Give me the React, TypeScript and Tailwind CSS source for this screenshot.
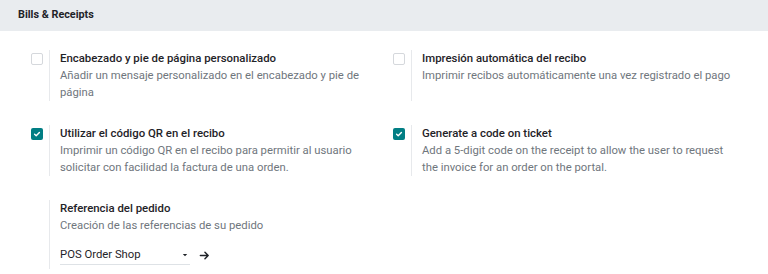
import React from 'react';

interface SettingProps {
  title: string;
  description: string;
  checked?: boolean;
  hasCheckbox?: boolean;
  children?: React.ReactNode;
}

const Checkbox = ({ checked }: { checked?: boolean }) => (
  <div
    className={
      checked
        ? "w-[12px] h-[12px] mt-[3px] rounded-[2px] bg-[#017e84] flex items-center justify-center"
        : "w-[12px] h-[12px] mt-[3px] rounded-[2px] border border-[#d5d8dc] bg-white"
    }
  >
    {checked && (
      <svg width="8" height="8" viewBox="0 0 8 8" fill="none">
        <path d="M1.6 4.2 3.2 5.7 6.4 2.4" stroke="white" strokeWidth="1.4" strokeLinecap="round" strokeLinejoin="round" />
      </svg>
    )}
  </div>
);

// descriptions carry their own line breaks so wrapping matches the settings page
const Setting = ({ title, description, checked, hasCheckbox = true, children }: SettingProps) => (
  <div className="flex pl-[13px]">
    <div className="w-[18px] shrink-0">{hasCheckbox && <Checkbox checked={checked} />}</div>
    <div className="border-l border-[#e7e9ec] pl-[10px] pr-2">
      <div className="text-[11.4px] leading-[17px] text-[#1f2328] font-medium">{title}</div>
      <div className="text-[11.3px] leading-[17px] text-[#6f767d] whitespace-pre-line">{description}</div>
      {children}
    </div>
  </div>
);

export default function App() {
  return (
    <div className="w-[768px] h-[274px] bg-white overflow-hidden font-[Roboto,sans-serif]">
      <div className="h-[31px] bg-[#e9ecef] flex items-center px-[18px]">
        <span className="text-[10.8px] font-bold text-[#1f2328]">Bills &amp; Receipts</span>
      </div>
      <div className="grid grid-cols-2 px-[18px] pt-[19px] gap-y-[24px] w-[760px]">
        <Setting
          title="Encabezado y pie de página personalizado"
          description={"Añadir un mensaje personalizado en el encabezado y pie de\npágina"}
        />
        <Setting
          title="Impresión automática del recibo"
          description="Imprimir recibos automáticamente una vez registrado el pago"
        />
        <Setting
          checked
          title="Utilizar el código QR en el recibo"
          description={"Imprimir un código QR en el recibo para permitir al usuario\nsolicitar con facilidad la factura de una orden."}
        />
        <Setting
          checked
          title="Generate a code on ticket"
          description={"Add a 5-digit code on the receipt to allow the user to request\nthe invoice for an order on the portal."}
        />
        <Setting
          hasCheckbox={false}
          title="Referencia del pedido"
          description="Creación de las referencias de su pedido"
        >
          <div className="flex items-center mt-[12px] pb-[4px]">
            <div className="w-[130px] flex items-center justify-between border-b border-[#dee2e6] pb-[1px]">
              <span className="text-[11.3px] leading-[17px] text-[#1f2328]">POS Order Shop</span>
              <svg width="8" height="8" viewBox="0 0 8 8" className="mr-[1px]">
                <path d="M1.8 3 4 5.3 6.2 3Z" fill="#1f2328" />
              </svg>
            </div>
            <svg width="11" height="11" viewBox="0 0 12 12" fill="none" className="ml-[9px]">
              <path d="M1.5 6h8.5M6.5 2.5 10 6 6.5 9.5" stroke="#1f2328" strokeWidth="1.6" strokeLinecap="round" strokeLinejoin="round" />
            </svg>
          </div>
        </Setting>
      </div>
    </div>
  );
}
